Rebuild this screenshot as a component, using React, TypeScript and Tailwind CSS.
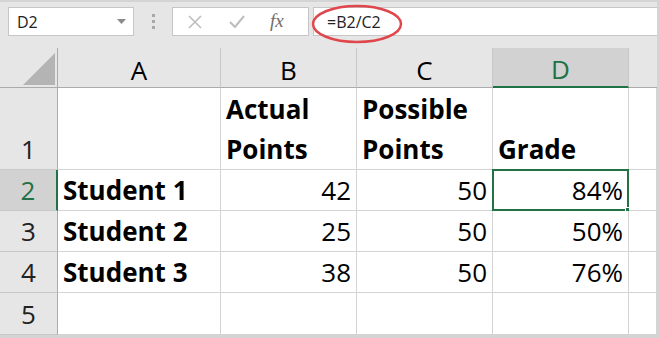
import type { ReactNode } from 'react'

const cols = ['A', 'B', 'C', 'D']

const rows: { label: string; cells: string[]; tall?: boolean }[] = [
  { label: '1', cells: ['', 'Actual\nPoints', 'Possible\nPoints', 'Grade'], tall: true },
  { label: '2', cells: ['Student 1', '42', '50', '84%'] },
  { label: '3', cells: ['Student 2', '25', '50', '50%'] },
  { label: '4', cells: ['Student 3', '38', '50', '76%'] },
  { label: '5', cells: ['', '', '', ''] },
]

function Cell({ children, right, bold, selected }: { children?: ReactNode; right?: boolean; bold?: boolean; selected?: boolean }) {
  return (
    <div
      className={`relative flex flex-col justify-end border-r border-b border-[#d4d4d4] bg-white px-[5px] leading-[40px] text-black ${
        right ? 'items-end' : 'items-start'
      } ${bold ? 'font-bold' : ''}`}
    >
      {children}
      {selected && (
        <div className="absolute -top-px -left-px -right-px -bottom-px border-2 border-[#217346]">
          <div className="absolute -right-[4px] -bottom-[4px] w-[6px] h-[6px] bg-[#217346] border border-white" />
        </div>
      )}
    </div>
  )
}

export default function App() {
  return (
    <div className="relative w-[660px] h-[338px] overflow-hidden bg-[#e6e6e6] border-t-2 border-r-[3px] border-b-[3px] border-[#d4d4d4] font-['Open_Sans',sans-serif]">
      {/* formula bar */}
      <div className="flex items-center h-[29px] mt-[5px] ml-[8px] text-[16px]">
        <div className="flex items-center justify-between w-[126px] h-full bg-white border border-[#c6c6c6] pl-[8px] pr-[7px] text-[#222]">
          <span>D2</span>
          <svg width="9" height="5" viewBox="0 0 9 5">
            <path d="M0 0 H9 L4.5 5 Z" fill="#8a8a8a" />
          </svg>
        </div>
        <div className="flex flex-col gap-[3px] ml-[18px] w-[3px]">
          <span className="w-[3px] h-[3px] bg-[#a8a8a8]" />
          <span className="w-[3px] h-[3px] bg-[#a8a8a8]" />
          <span className="w-[3px] h-[3px] bg-[#a8a8a8]" />
        </div>
        <div className="flex items-center w-[137px] h-full ml-[17px] bg-white border border-[#c6c6c6]">
          <svg className="ml-[15px]" width="14" height="14" viewBox="0 0 14 14">
            <path d="M1 1 L13 13 M13 1 L1 13" stroke="#bdbdbd" strokeWidth="1.6" />
          </svg>
          <svg className="ml-[27px]" width="16" height="13" viewBox="0 0 16 13">
            <path d="M1 7 L6 12 L15 1" stroke="#bdbdbd" strokeWidth="2" fill="none" />
          </svg>
          <span className="ml-[25px] font-['Liberation_Serif',serif] italic text-[19px] text-[#6e6e6e]">fx</span>
        </div>
        <div className="flex items-center flex-1 h-full ml-[4px] bg-white border-l border-y border-[#c6c6c6] pl-[13px] text-[#222]">
          =B2/C2
        </div>
      </div>

      {/* grid */}
      <div className="grid grid-cols-[58px_163px_136px_136px_136px_1fr] grid-rows-[40px_82px_41px_41px_41px_42px] mt-[12px] text-[26px]">
        <div className="relative border-r border-b border-[#ababab]">
          <svg className="absolute left-0 top-0" width="58" height="40" viewBox="0 0 58 40">
            <polygon points="23,37 55,37 55,5" fill="#b4b4b4" />
          </svg>
        </div>
        {cols.map((c) => (
          <div
            key={c}
            className={`flex items-end justify-center leading-[34px] border-r border-[#c8c8c8] ${
              c === 'D' ? 'bg-[#d2d2d2] text-[#217346] border-b-2 border-b-[#217346]' : 'border-b border-b-[#ababab] text-black'
            }`}
          >
            {c}
          </div>
        ))}
        <div className="border-b border-[#ababab]" />

        {rows.map((r) => (
          <div key={r.label} className="contents">
            <div
              className={`flex items-end justify-center leading-[40px] border-b border-[#c8c8c8] ${
                r.label === '2'
                  ? 'bg-[#d2d2d2] text-[#217346] border-r-2 border-r-[#217346]'
                  : 'border-r border-r-[#ababab] text-[#222]'
              }`}
            >
              {r.label}
            </div>
            {r.cells.map((v, i) => {
              const numeric = i > 0 && !r.tall
              return (
                <Cell key={i} right={numeric} bold={i === 0 || !!r.tall} selected={r.label === '2' && i === 3}>
                  {v.split('\n').map((line, j) => (
                    <span key={j}>{line}</span>
                  ))}
                </Cell>
              )
            })}
            <Cell />
          </div>
        ))}
      </div>

      {/* red annotation */}
      <svg className="absolute left-0 top-0 pointer-events-none" width="660" height="338">
        <ellipse cx="357" cy="22" rx="44" ry="18" fill="none" stroke="#e0474c" strokeWidth="2.5" />
      </svg>
    </div>
  )
}
